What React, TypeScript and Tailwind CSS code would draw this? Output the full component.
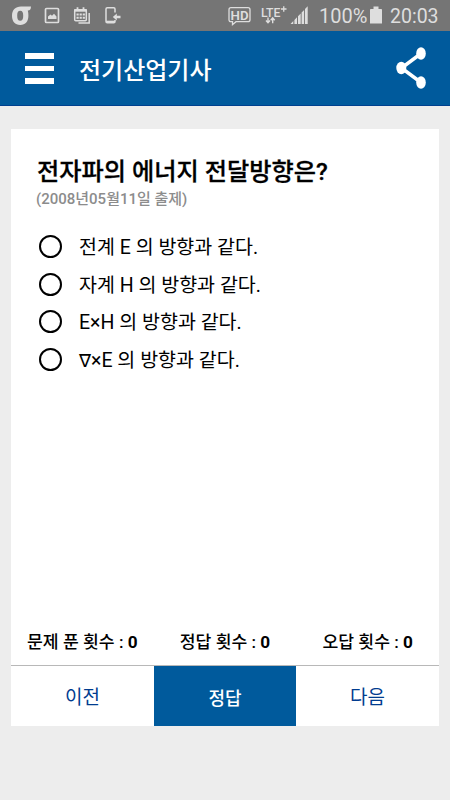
import { useState } from "react";

const OPTIONS = [
  "전계 E 의 방향과 같다.",
  "자계 H 의 방향과 같다.",
  "E×H 의 방향과 같다.",
  "∇×E 의 방향과 같다.",
];

const STATS = [
  { label: "문제 푼 횟수", count: 0 },
  { label: "정답 횟수", count: 0 },
  { label: "오답 횟수", count: 0 },
];

// The CJK face draws ∇ full width, so it gets a proportional face of its own.
function OptionText({ text }: { text: string }) {
  if (!text.startsWith("∇")) return <>{text}</>;
  return (
    <>
      <span className="font-['DejaVu_Sans',sans-serif] text-[18px]">∇</span>
      {text.slice(1)}
    </>
  );
}

function StatusBar() {
  return (
    <div className="flex h-[31px] items-center justify-between bg-[#757575] pl-[12px] pr-[12px] text-[#dedede]">
      <svg width="110" height="31" viewBox="0 0 110 31" fill="none" stroke="currentColor">
        {/* carrier mark */}
        <path
          d="M19 6.500c0 2.500-1 4-3 4h-.2c.4 1.500.6 3 .6 5C16.400 21.500 13.500 25 8.200 25 3 25 0 21.500 0 15.800 0 10 3.300 6.500 9 6.500zM8.200 10.800c-2.200 0-3 1.700-3 5s.8 5 3 5 3-1.700 3-5-.8-5-3-5z"
          fill="currentColor"
          fillRule="evenodd"
          stroke="none"
        />
        {/* gallery */}
        <rect x="33.500" y="8.500" width="13" height="14" rx="1" strokeWidth="1.700" />
        <path d="M36 19v-2.500l2.500-2 1.500 1.200 2-2 2.500 2.800V19z" fill="currentColor" stroke="none" />
        {/* calendar */}
        <rect x="62.700" y="9.700" width="11.600" height="11.100" rx="1" strokeWidth="1.500" />
        <path d="M62 10.500h13" strokeWidth="2.400" />
        <path d="M65.500 7.300v3M71.500 7.300v3" strokeWidth="1.800" />
        <path d="M64.500 14.500h8.500M64.500 17.800h8.500" strokeWidth="2" strokeDasharray="2.200 .9" />
        <path d="M77.200 13V23H66.500" strokeWidth="1.500" />
        {/* phone with arrow */}
        <path d="M103 12.500V9c0-.8-.5-1.300-1.300-1.300h-6.400c-.8 0-1.300.5-1.300 1.300v12.500c0 .8.500 1.300 1.300 1.300h6.400c.8 0 1.300-.5 1.300-1.300v-1.500" strokeWidth="1.500" />
        <path d="M94 21.700h9" strokeWidth="2" />
        <path d="M100.800 17l4-3.500v2.300h3.700v2.400h-3.700v2.300z" fill="currentColor" stroke="none" />
      </svg>

      <div className="flex items-center font-['Roboto',sans-serif]">
        <svg width="86" height="31" viewBox="0 0 86 31" fill="none" stroke="currentColor">
          <path d="M5 7.700h17c1.300 0 2 .7 2 2v10c0 1.300-.7 2-2 2H10L6.500 24.700v-3H5c-1.300 0-2-.7-2-2v-10c0-1.300.7-2 2-2z" strokeWidth="1.300" />
          <text x="4.600" y="19.500" fontSize="13.500" fontWeight="600" textLength="18" lengthAdjust="spacingAndGlyphs" fill="currentColor" stroke="none">HD</text>
          <text x="35" y="16.500" fontSize="12" fontWeight="500" textLength="19.500" lengthAdjust="spacingAndGlyphs" fill="currentColor" stroke="none">LTE</text>
          <path d="M55 9h5.500M57.750 6.300v5.400" strokeWidth="1.300" />
          <path d="M42 17.500v5m-2-2 2 2.300 2-2.300M46.700 23.200v-5m-2 2 2-2.300 2 2.300" strokeWidth="1.400" />
          <path d="M64.500 24l2.800-2.900V24zM68.400 24v-4l2.600-2.700V24zM72 24v-7.700l2.700-2.800V24zM75.600 24V12.500l2.500-2.600V24zM79 24V9l2.700-2.800V24z" fill="currentColor" stroke="none" />
        </svg>
        <span className="relative top-px ml-[7px] w-[48px] whitespace-nowrap text-[20px] leading-[31px]">100%</span>
        <svg className="ml-[3px]" width="12" height="31" viewBox="0 0 12 31" fill="currentColor">
          <path d="M3.500 6.500h5V9H11c.6 0 1 .4 1 1v13.500H0V10c0-.6.4-1 1-1h2.500z" />
        </svg>
        <span className="relative top-px ml-[8px] w-[48px] whitespace-nowrap text-[19.500px] leading-[31px]">20:03</span>
      </div>
    </div>
  );
}

function Header() {
  return (
    <header className="flex h-[75px] items-center border-b border-[#00408f] bg-[#005a9c] pl-[25px] pr-[24px] text-white">
      <button type="button" aria-label="메뉴" className="flex w-[29px] flex-col gap-[7px] pt-px">
        <span className="h-[5.500px] bg-white" />
        <span className="h-[5.500px] bg-white" />
        <span className="h-[5.500px] bg-white" />
      </button>
      <h1 className="ml-[25px] pt-[5px] text-[24px] leading-[30px] font-medium">전기산업기사</h1>
      <button type="button" aria-label="공유" className="ml-auto">
        <svg width="30" height="42" viewBox="0 0 30 42" fill="white" stroke="white">
          <path d="M25 6.500 5.500 21 25 35.500" fill="none" strokeWidth="3.500" />
          <ellipse cx="25" cy="6.500" rx="4.800" ry="6.200" stroke="none" />
          <ellipse cx="5.300" cy="21" rx="5" ry="6.200" stroke="none" />
          <ellipse cx="25" cy="35.500" rx="4.800" ry="6.200" stroke="none" />
        </svg>
      </button>
    </header>
  );
}

export default function App() {
  const [selected, setSelected] = useState<number | null>(null);

  return (
    <div className="flex h-[800px] w-[450px] flex-col bg-[#ededed] font-['Roboto','Noto_Sans_CJK_KR',sans-serif] text-black">
      <StatusBar />
      <Header />
      <main className="mx-[11px] mt-[23px] flex h-[597px] flex-col bg-white">
        <section className="flex-1 pl-[25px] pt-[26px]">
          <h2 className="whitespace-nowrap pl-px text-[24.200px] leading-[34px] font-medium [-webkit-text-stroke:0.3px_black]">
            전자파의 에너지 전달방향은?
          </h2>
          <p className="text-[15px] leading-[20px] font-medium text-[#8c8c8c]">(2008년05월11일 출제)</p>
          <ul className="mt-[19px]">
            {OPTIONS.map((option, i) => (
              <li key={option} className="flex h-[37.500px] items-center">
                <button
                  type="button"
                  role="radio"
                  aria-checked={selected === i}
                  aria-label={option}
                  onClick={() => setSelected(i)}
                  className="ml-[3px] flex size-[23px] items-center justify-center rounded-full border-[2.500px] border-black"
                >
                  {selected === i && <span className="size-[11px] rounded-full bg-black" />}
                </button>
                <span className="ml-[17px] whitespace-nowrap pt-[3px] text-[19.500px] leading-[30px]">
                  <OptionText text={option} />
                </span>
              </li>
            ))}
          </ul>
        </section>

        <div className="grid h-[49px] grid-cols-3 items-center border-b border-[#b8b8b8] pt-[3px] text-center text-[17.200px] font-medium">
          {STATS.map(({ label, count }) => (
            <span key={label} className="whitespace-nowrap">
              {label} : <b className="font-bold">{count}</b>
            </span>
          ))}
        </div>
        <div className="flex h-[60px] text-[19px] text-[#003c8f]">
          <button type="button" className="w-[143px] pt-[4px]">이전</button>
          <button type="button" className="w-[142px] bg-[#005a9c] pt-[4px] text-[18px] font-medium text-white">정답</button>
          <button type="button" className="w-[143px] pt-[4px]">다음</button>
        </div>
      </main>
    </div>
  );
}
